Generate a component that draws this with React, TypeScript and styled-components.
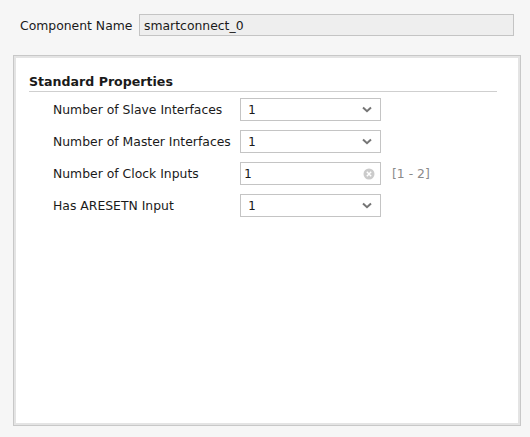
import React from "react";
import styled, { createGlobalStyle } from "styled-components";

const Global = createGlobalStyle`
  html, body { margin: 0; padding: 0; background: #f6f6f6; }
  body { font-family: "DejaVu Sans", Verdana, sans-serif; font-size: 12px; color: #1a1a1a; }
`;

const Page = styled.div`
  width: 530px;
  height: 437px;
  box-sizing: border-box;
  padding: 14px 9px 0 13px;
  background: #f6f6f6;
`;

const NameRow = styled.div`
  display: flex;
  align-items: center;
  height: 22px;
  padding-left: 7px;
`;

const NameLabel = styled.span`
  font-size: 12.4px;
  width: 119px;
`;

const NameInput = styled.div`
  width: 375px;
  height: 22px;
  box-sizing: border-box;
  border: 1px solid #c4c4c4;
  background: #eeeeee;
  padding-left: 4px;
  display: flex;
  align-items: center;
  font-size: 12.4px;
`;

const Panel = styled.div`
  margin-top: 19px;
  width: 508px;
  height: 371px;
  box-sizing: border-box;
  border: 1px solid #c8c8c8;
  box-shadow: inset 0 0 0 2px #e4e4e4;
  background: #ffffff;
  padding: 18px 23px 0 15px;
`;

const SectionTitle = styled.div`
  font-weight: bold;
  font-size: 12.6px;
  padding-bottom: 1px;
  border-bottom: 1px solid #cfcfcf;
  line-height: 16px;
`;

const Rows = styled.div`
  display: flex;
  flex-direction: column;
  gap: 9px;
  padding: 6px 0 0 24px;
`;

const Row = styled.div`
  display: flex;
  align-items: center;
  height: 23px;
`;

const Label = styled.span`
  width: 187px;
  font-size: 12.4px;
`;

const Field = styled.div<{ $pad: number }>`
  width: 141px;
  height: 23px;
  box-sizing: border-box;
  border: 1px solid #c4c4c4;
  background: #ffffff;
  display: flex;
  align-items: center;
  padding: 0 8px 0 ${(p) => p.$pad}px;
  font-family: "DejaVu Sans Mono", monospace;
  font-size: 12.4px;
`;

const Value = styled.span`
  flex: 1;
`;

const Range = styled.span`
  margin-left: 11px;
  color: #8a8a8a;
  font-size: 12.4px;
`;

const Chevron = () => (
  <svg width="10" height="7" viewBox="0 0 10 7">
    <path d="M1 1.5 L5 5.2 L9 1.5" fill="none" stroke="#757575" strokeWidth="2" />
  </svg>
);

const ClearIcon = () => (
  <svg width="12" height="12" viewBox="0 0 12 12" style={{ marginRight: -3 }}>
    <circle cx="6" cy="6" r="5.5" fill="#cbcbcb" />
    <path d="M3.8 3.8 L8.2 8.2 M8.2 3.8 L3.8 8.2" stroke="#ffffff" strokeWidth="1.4" />
  </svg>
);

export default function App() {
  return (
    <Page>
      <Global />
      <NameRow>
        <NameLabel>Component Name</NameLabel>
        <NameInput>smartconnect_0</NameInput>
      </NameRow>
      <Panel>
        <SectionTitle>Standard Properties</SectionTitle>
        <Rows>
          <Row>
            <Label>Number of Slave Interfaces</Label>
            <Field $pad={7}>
              <Value>1</Value>
              <Chevron />
            </Field>
          </Row>
          <Row>
            <Label>Number of Master Interfaces</Label>
            <Field $pad={7}>
              <Value>1</Value>
              <Chevron />
            </Field>
          </Row>
          <Row>
            <Label>Number of Clock Inputs</Label>
            <Field $pad={3}>
              <Value>1</Value>
              <ClearIcon />
            </Field>
            <Range>[1 - 2]</Range>
          </Row>
          <Row>
            <Label>Has ARESETN Input</Label>
            <Field $pad={7}>
              <Value>1</Value>
              <Chevron />
            </Field>
          </Row>
        </Rows>
      </Panel>
    </Page>
  );
}
